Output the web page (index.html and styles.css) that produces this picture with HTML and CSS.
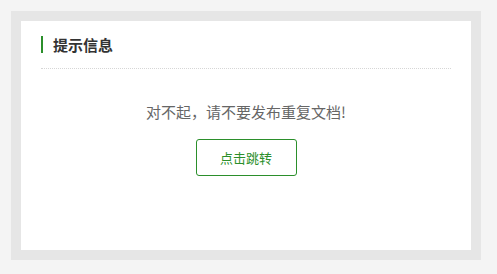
FILE: index.html
```html
<!DOCTYPE html>
<html lang="zh-CN">
<head>
  <meta charset="UTF-8" />
  <title>提示信息</title>
  <meta name="viewport" content="width=device-width, initial-scale=1.0" />
  <link rel="stylesheet" href="styles.css">
</head>
<body>

<div class="frame">
  <div class="box">
    <div class="box-head">
      <div class="box-title">提示信息</div>
    </div>
    <div class="box-body">
      <div class="message">对不起，请不要发布重复文档!</div>
      <a class="jump-btn" href="#">点击跳转</a>
    </div>
  </div>
</div>

</body>
</html>
```

FILE: styles.css
```css
body {
  font-family: "Noto Sans CJK SC", "Liberation Sans", sans-serif;
  background: #f4f4f4;
  color: #333;
  margin: 0;
  padding: 11px;
}

.frame {
  width: 450px;
  height: 229px;
  padding: 10px;
  background: #e6e6e6;
}

.box {
  height: 100%;
  background: #fff;
  padding: 0 20px;
  box-sizing: border-box;
}

.box-head {
  padding: 15px 0;
  border-bottom: 1px dotted #d6d6d6;
}

.box-title {
  border-left: 2px solid #2b8f2b;
  padding-left: 10px;
  font-size: 15px;
  font-weight: bold;
  line-height: 17px;
  color: #333;
}

.box-body {
  text-align: center;
  padding-top: 33px;
}

.message {
  font-size: 15px;
  line-height: 20px;
  color: #666;
}

.jump-btn {
  display: inline-block;
  margin-top: 17px;
  width: 101px;
  height: 37px;
  line-height: 35px;
  box-sizing: border-box;
  border: 1px solid #2b8f2b;
  border-radius: 3px;
  color: #2b8f2b;
  font-size: 13px;
  text-decoration: none;
}
```
